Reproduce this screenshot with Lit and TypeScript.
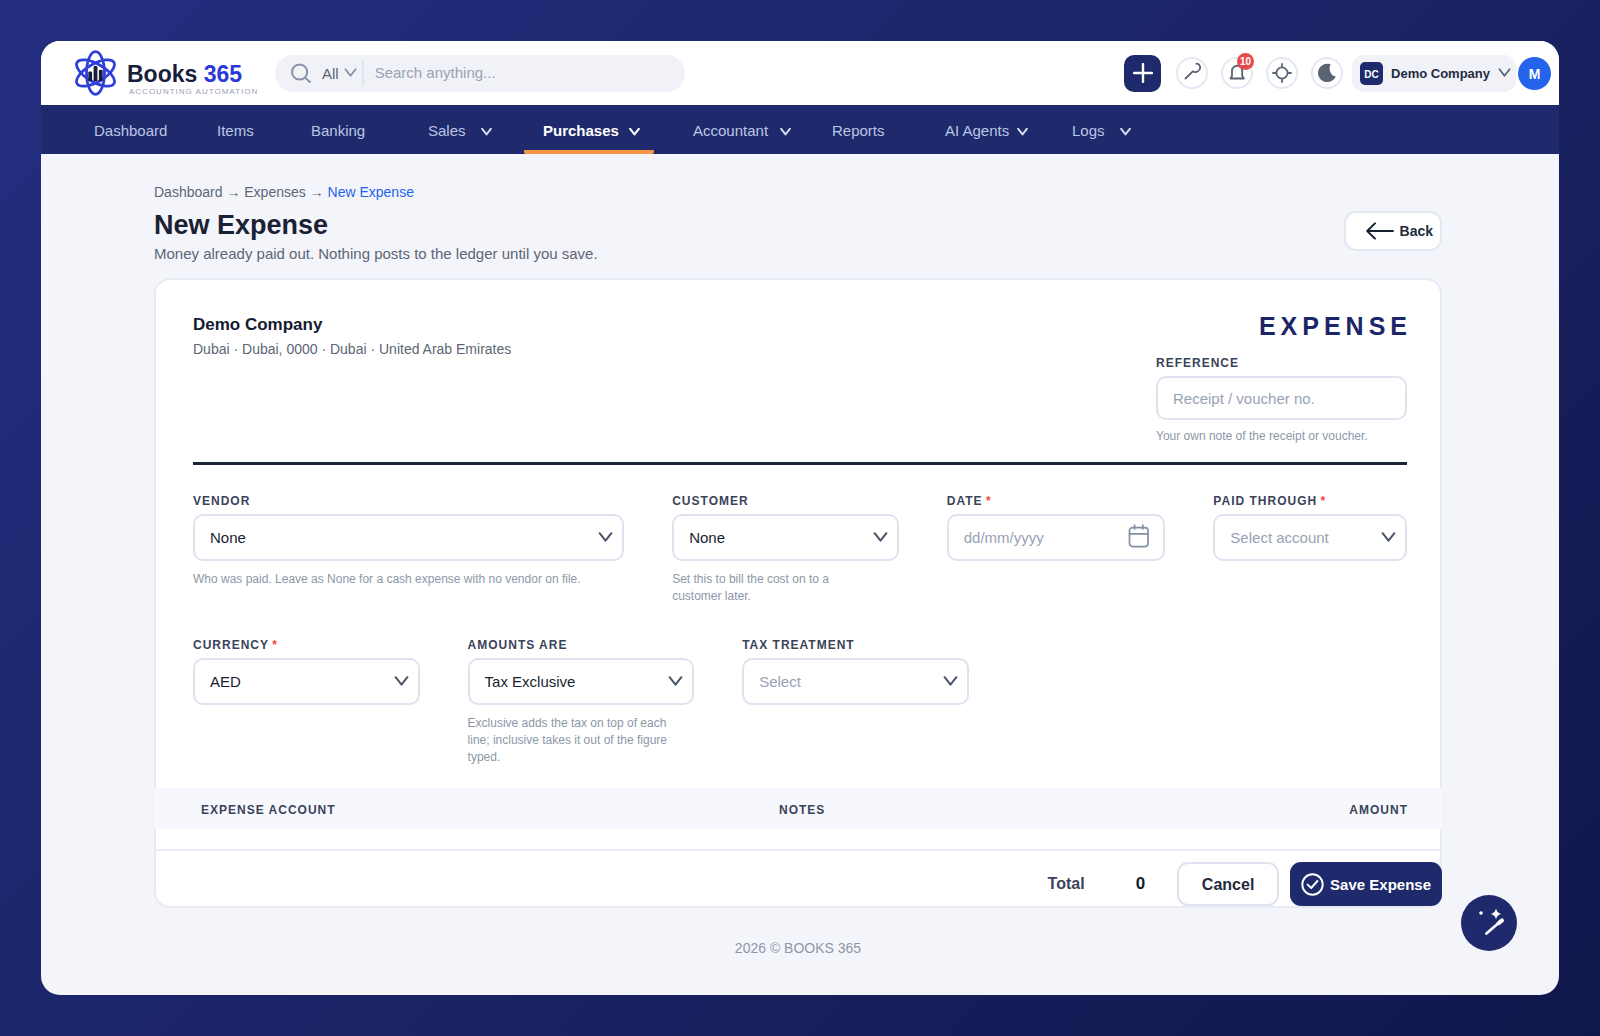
import { LitElement, html, css, nothing } from "lit";
import { customElement, property } from "lit/decorators.js";
import { classMap } from "lit/directives/class-map.js";

const FONT = css`"Liberation Sans", Arial, Helvetica, sans-serif`;

const chevron = (size: "nav" | "small" | "field") => html`
  <svg class="chevron ${size}" viewBox="0 0 14 10" aria-hidden="true">
    <path d="M1.5 1 L7 8 L12.5 1" fill="none" stroke="currentColor"
      stroke-width=${size === "nav" ? 2.6 : 1.9} stroke-linecap="round" stroke-linejoin="round" />
  </svg>`;

const chevronStyles = css`
  .chevron { display: block; flex: none; }
  .chevron.nav { width: 11px; height: 8px; }
  .chevron.small { width: 13px; height: 10px; }
  .chevron.field { width: 15px; height: 11px; }
`;

interface NavItem {
  label: string;
  menu?: boolean;
  active?: boolean;
  spread?: "tight" | "wide";
}

const NAV: NavItem[] = [
  { label: "Dashboard" },
  { label: "Items" },
  { label: "Banking" },
  { label: "Sales", menu: true, spread: "wide" },
  { label: "Purchases", menu: true, active: true },
  { label: "Accountant", menu: true },
  { label: "Reports" },
  { label: "AI Agents", menu: true, spread: "tight" },
  { label: "Logs", menu: true, spread: "wide" },
];

@customElement("app-header")
export class AppHeader extends LitElement {
  static styles = [
    chevronStyles,
    css`
      :host { display: block; font-family: ${FONT}; }
      button { font: inherit; border: 0; padding: 0; cursor: pointer; }
      .bar {
        display: flex; align-items: center; height: 64px; box-sizing: border-box;
        padding: 0 8px 0 33px; background: #fff;
      }
      .brand { display: flex; align-items: center; gap: 10px; width: 201px; flex: none; text-decoration: none; }
      .mark { width: 43px; height: 48px; flex: none; }
      .name { display: block; font-size: 23px; line-height: 24px; font-weight: 700; color: #161e3c; padding-top: 13px; }
      .name em { font-style: normal; color: #2b3ad6; }
      .tagline { display: block; padding-left: 2px; font-size: 8px; line-height: 10px; letter-spacing: 1px; color: #98a1b3; white-space: nowrap; margin-top: 1px; }
      .search {
        display: flex; align-items: center; flex: 0 1 410px; height: 37px; box-sizing: border-box;
        padding-left: 16px; border-radius: 19px; background: #f1f2f8; color: #8490a5;
      }
      .search svg.glass { width: 20px; height: 20px; flex: none; }
      .scope { display: flex; align-items: center; gap: 5px; margin-left: 11px; font-size: 15px; color: #5a6474; background: none; }
      .scope .chevron { color: #8490a5; }
      .rule { width: 2px; height: 26px; margin: 0 11px 0 5px; background: #dfe4ee; }
      .search input {
        flex: 1; min-width: 0; border: 0; padding: 0; outline: 0; background: none;
        font: 15px/20px ${FONT}; color: #161e2e;
      }
      .search input::placeholder { color: #98a2b3; opacity: 1; }
      .tools { display: flex; align-items: center; margin-left: auto; }
      .add { display: grid; place-items: center; width: 37px; height: 37px; border-radius: 10px; background: #1e2a6b; color: #fff; margin-right: 15px; }
      .rounds { display: flex; gap: 13px; margin-right: 9px; }
      .round {
        position: relative; display: grid; place-items: center; width: 32px; height: 32px; box-sizing: border-box;
        border: 2px solid #e4e8f2; border-radius: 50%; background: #fff; color: #5a6474;
      }
      .round svg { width: 24px; height: 24px; }
      .badge {
        position: absolute; top: -6px; right: -3px; width: 17px; height: 17px; border-radius: 50%;
        background: #e5484d; color: #fff; font-size: 10px; line-height: 18px; font-weight: 700; text-align: center;
      }
      .company {
        display: flex; align-items: center; height: 37px; padding: 0 5px 0 8px; margin-right: 2px; border-radius: 12px;
        background: #f1f2f8; color: #232b3f; font-size: 13px; font-weight: 700; white-space: nowrap;
      }
      .company .chevron { margin-left: 8px; color: #5a6474; }
      .initials {
        width: 23px; height: 23px; margin-right: 8px; border-radius: 5px; background: #1e2a6b; color: #fff;
        font-size: 10px; line-height: 25px; text-align: center;
      }
      .avatar { width: 33px; height: 33px; border-radius: 50%; background: #2563eb; color: #fff; font-weight: 700; font-size: 14px; line-height: 35px; }
      nav {
        display: grid; grid-template-columns: 123px 94px 117px 115px 150px 139px 113px 127px auto;
        justify-content: start; height: 49px; padding-left: 34px; background: #1e2a6b;
      }
      .item {
        display: flex; align-items: center; justify-self: start; gap: 12px; padding: 2px 14px 0 19px;
        color: #bcc5e6; font-size: 15px; text-decoration: none; white-space: nowrap; box-sizing: border-box;
      }
      .item.wide { gap: 15px; }
      .item.tight { gap: 8px; }
      .item .chevron { color: #d3d9f0; margin-top: 3px; }
      .item.active { gap: 10px; padding-top: 6px; border-bottom: 4px solid #f79646; border-radius: 2px; color: #fff; font-weight: 700; }
      .item.active .chevron { color: #fff; }
    `,
  ];

  render() {
    return html`
      <header class="bar">
        <a class="brand" href="#home" aria-label="Books 365">
          <svg class="mark" viewBox="-21.5 -24 43 48" aria-hidden="true">
            <g fill="none" stroke="#2f40da" stroke-width="2.8">
              <ellipse rx="9" ry="21.3" />
              <ellipse rx="9" ry="21.3" transform="rotate(60)" />
              <ellipse rx="9" ry="21.3" transform="rotate(-60)" />
            </g>
            <g fill="#161e3c">
              <rect x="-7.2" y="-1.5" width="3.8" height="9.7" rx="1.2" />
              <rect x="-1.9" y="-7" width="3.8" height="15.2" rx="1.2" />
              <rect x="3.4" y="-3.2" width="3.8" height="11.4" rx="1.2" />
            </g>
          </svg>
          <span>
            <span class="name">Books <em>365</em></span>
            <span class="tagline">ACCOUNTING AUTOMATION</span>
          </span>
        </a>
        <div class="search" role="search">
          <svg class="glass" viewBox="0 0 20 20" fill="none" stroke="currentColor" stroke-width="2" stroke-linecap="round" aria-hidden="true">
            <circle cx="8.6" cy="9" r="7.6" /><path d="M14.2 14.6 L18.8 19" />
          </svg>
          <button class="scope" type="button">All ${chevron("small")}</button>
          <span class="rule"></span>
          <input type="search" aria-label="Search" placeholder="Search anything..." />
        </div>
        <div class="tools">
          <button class="add" type="button" aria-label="Create">
            <svg width="20" height="20" viewBox="0 0 20 20" aria-hidden="true">
              <path d="M10 1 V19 M1 10 H19" stroke="currentColor" stroke-width="2.4" stroke-linecap="round" />
            </svg>
          </button>
          <div class="rounds">
            <button class="round" type="button" aria-label="Tools">
              <svg viewBox="0 0 24 24" fill="none" stroke="currentColor" stroke-width="1.8" stroke-linecap="round" stroke-linejoin="round">
                <path d="M5.5 17.5 L12.8 10.4 C16 12.2 20 10.2 20.2 6.8 C20.3 4.5 18.7 2.6 16.4 2.7" />
              </svg>
            </button>
            <button class="round" type="button" aria-label="Notifications">
              <svg viewBox="0 0 24 24" fill="none" stroke="currentColor" stroke-width="1.8" stroke-linecap="round" stroke-linejoin="round">
                <path d="M5.5 17.5 H18.8 L17.2 15 V10 C17.2 3 7 3 7 10 V15 Z" />
              </svg>
              <span class="badge">10</span>
            </button>
            <button class="round" type="button" aria-label="Locate">
              <svg viewBox="0 0 24 24" fill="none" stroke="currentColor" stroke-width="1.8" stroke-linecap="round">
                <circle cx="12" cy="12" r="5.6" />
                <path d="M12 3 V6 M12 18 V21 M3 12 H6 M18 12 H21" />
              </svg>
            </button>
            <button class="round" type="button" aria-label="Dark mode">
              <svg viewBox="0 0 24 24">
                <path fill="currentColor" d="M15.6 3.2 C13.4 7.2 14.8 14.2 20.8 15.6 C18.6 20.6 13 22.4 8.4 20.2 C3.4 17.8 1.6 11.8 4.2 7.4 C6.4 3.4 11.2 1.8 15.6 3.2 Z" />
              </svg>
            </button>
          </div>
          <button class="company" type="button">
            <span class="initials">DC</span>Demo Company${chevron("small")}
          </button>
          <button class="avatar" type="button" aria-label="Account">M</button>
        </div>
      </header>
      <nav aria-label="Main">
        ${NAV.map(
          (n) => html`<a
            href="#${n.label.toLowerCase().replace(" ", "-")}"
            aria-current=${n.active ? "page" : nothing}
            class=${classMap({ item: true, active: !!n.active, wide: n.spread === "wide", tight: n.spread === "tight" })}
            >${n.label}${n.menu ? chevron("nav") : nothing}</a>`,
        )}
      </nav>
    `;
  }
}

@customElement("form-field")
export class FormField extends LitElement {
  @property() label = "";
  @property() kind: "text" | "select" | "date" = "text";
  @property() value = "";
  @property() placeholder = "";
  @property() hint = "";
  @property({ type: Boolean }) required = false;

  static styles = [
    chevronStyles,
    css`
      :host { display: block; min-width: 0; font-family: ${FONT}; }
      label { display: block; font-size: 12px; line-height: 14px; font-weight: 700; letter-spacing: 1px; color: #3a435a; }
      .star { color: #ef4444; margin-left: -1px; }
      .box { display: grid; align-items: center; margin-top: 6px; }
      .box > * { grid-area: 1 / 1; }
      input, select {
        width: 100%; height: 47px; box-sizing: border-box; margin: 0; padding: 0 40px 0 15px; appearance: none;
        border: 2px solid #dfe3ef; border-radius: 10px; background: #fff; outline: 0;
        font: 15px/20px ${FONT}; color: #171f32;
      }
      .text input { height: 44px; padding-right: 15px; }
      select.empty, input::placeholder { color: #98a2b3; opacity: 1; }
      .chevron { justify-self: end; margin-right: 11px; color: #4a5568; pointer-events: none; }
      .pick { justify-self: end; margin: 0 15px 4px 0; padding: 0; border: 0; background: none; color: #8490a5; }
      .pick svg { display: block; width: 22px; height: 24px; }
      .hint { margin: 10px 0 0; padding-right: 20px; font-size: 12px; line-height: 17px; color: #8d97a8; }
      .text + .hint { margin-top: 8px; }
    `,
  ];

  private control() {
    const describedBy = this.hint ? "hint" : nothing;
    if (this.kind === "select") {
      const shown = this.value || this.placeholder;
      return html`
        <select id="control" class=${this.value ? "" : "empty"} ?required=${this.required} aria-describedby=${describedBy}>
          <option>${shown}</option>
        </select>
        ${chevron("field")}`;
    }
    return html`
      <input id="control" type="text" placeholder=${this.placeholder} ?required=${this.required} aria-describedby=${describedBy} />
      ${this.kind === "date"
        ? html`<button class="pick" type="button" aria-label="Pick a date">
            <svg viewBox="0 0 22 24" fill="none" stroke="currentColor" stroke-width="1.7" stroke-linecap="round">
              <rect x="1.5" y="3.6" width="18.5" height="19" rx="3" />
              <path d="M1.5 9.8 H20 M6.6 1.2 V5 M14.8 1.2 V5" />
            </svg>
          </button>`
        : nothing}`;
  }

  render() {
    return html`
      <label for="control">${this.label}${this.required ? html` <span class="star">*</span>` : nothing}</label>
      <div class="box ${this.kind}">${this.control()}</div>
      ${this.hint ? html`<p id="hint" class="hint">${this.hint}</p>` : nothing}
    `;
  }
}

@customElement("expense-card")
export class ExpenseCard extends LitElement {
  static styles = css`
    :host { display: block; font-family: ${FONT}; }
    .card { border: 2px solid #e8eaf4; border-radius: 16px; background: #fff; }
    .top { display: flex; justify-content: space-between; margin: 0 33px 0 37px; padding: 32px 0 17px; border-bottom: 3px solid #1c2536; }
    h2 { margin: 0; padding-top: 2px; font-size: 17px; line-height: 22px; color: #131b2e; }
    .address { margin: 4px 0 0; font-size: 14px; line-height: 18px; color: #5d6675; }
    .reference { width: 251px; }
    .kind { margin: -1px -5px 15px 0; font-size: 25px; line-height: 30px; font-weight: 700; letter-spacing: 5px; color: #1b2568; text-align: right; }
    .fields { display: grid; column-gap: 48px; margin: 0 33px 0 37px; }
    .first { grid-template-columns: 432fr 227fr 219fr 194fr; padding-top: 29px; }
    .second { grid-template-columns: 227fr 227fr 227fr 391fr; padding: 33px 0 22px; }
    table { width: calc(100% + 4px); margin: 0 -2px; border-collapse: collapse; table-layout: fixed; background: #f7f8fd; }
    th { height: 41px; padding: 3px 0 0; box-sizing: border-box; font-size: 12px; line-height: 14px; letter-spacing: 1px; color: #3a435a; text-align: left; }
    .c-account { width: 625px; padding-left: 47px; }
    .c-amount { padding-right: 34px; text-align: right; }
    .total-bar {
      display: flex; align-items: center; justify-content: flex-end; margin: 20px -2px 0 0; padding: 11px 0 0;
      border-top: 2px solid #e8ecf5; font-weight: 700;
    }
    .total-bar .name { margin-right: 51px; font-size: 16px; color: #3a435a; }
    .total-bar output { margin-right: 32px; font-size: 17px; color: #131b2e; }
    button { height: 44px; box-sizing: border-box; border-radius: 11px; font: 700 15px/20px ${FONT}; cursor: pointer; }
    .cancel { width: 102px; margin-right: 11px; padding: 2px 0 0; border: 2px solid #dfe3ef; background: #fff; color: #232b3f; font-size: 16px; }
    .save { display: flex; align-items: center; gap: 6px; padding: 0 11px; border: 0; background: #1e2a6b; color: #fff; }
    .save svg { width: 23px; height: 23px; }
    .save span { padding-top: 2px; }
  `;

  render() {
    return html`
      <form class="card" @submit=${(e: Event) => e.preventDefault()}>
        <div class="top">
          <div>
            <h2>Demo Company</h2>
            <p class="address">Dubai · Dubai, 0000 · Dubai · United Arab Emirates</p>
          </div>
          <div class="reference">
            <p class="kind">EXPENSE</p>
            <form-field label="REFERENCE" placeholder="Receipt / voucher no." hint="Your own note of the receipt or voucher."></form-field>
          </div>
        </div>
        <div class="fields first">
          <form-field kind="select" label="VENDOR" value="None" hint="Who was paid. Leave as None for a cash expense with no vendor on file."></form-field>
          <form-field kind="select" label="CUSTOMER" value="None" hint="Set this to bill the cost on to a customer later."></form-field>
          <form-field kind="date" label="DATE" placeholder="dd/mm/yyyy" required></form-field>
          <form-field kind="select" label="PAID THROUGH" placeholder="Select account" required></form-field>
        </div>
        <div class="fields second">
          <form-field kind="select" label="CURRENCY" value="AED" required></form-field>
          <form-field kind="select" label="AMOUNTS ARE" value="Tax Exclusive" hint="Exclusive adds the tax on top of each line; inclusive takes it out of the figure typed."></form-field>
          <form-field kind="select" label="TAX TREATMENT" placeholder="Select"></form-field>
        </div>
        <table>
          <thead>
            <tr>
              <th class="c-account" scope="col">EXPENSE ACCOUNT</th>
              <th scope="col">NOTES</th>
              <th class="c-amount" scope="col">AMOUNT</th>
            </tr>
          </thead>
        </table>
        <div class="total-bar">
          <span class="name">Total</span>
          <output>0</output>
          <button class="cancel" type="button">Cancel</button>
          <button class="save" type="submit">
            <svg viewBox="0 0 23 23" fill="none" stroke="currentColor" stroke-width="1.9" stroke-linecap="round" stroke-linejoin="round" aria-hidden="true">
              <circle cx="11.5" cy="11.5" r="10.2" /><path d="M6.6 11.6 L10.2 15 L16.4 8" />
            </svg>
            <span>Save Expense</span>
          </button>
        </div>
      </form>
    `;
  }
}

@customElement("app-root")
export class AppRoot extends LitElement {
  static styles = css`
    :host {
      display: flex; min-height: 100vh; box-sizing: border-box; padding: 41px;
      background: linear-gradient(135deg, #232e80 0%, #1b2466 50%, #10174c 100%);
      font-family: ${FONT};
    }
    .window { position: relative; flex: 1; min-width: 0; border-radius: 19px; overflow: hidden; background: #f4f5fb; }
    main { padding: 29px 117px 0 113px; }
    .crumbs { font-size: 14px; line-height: 18px; color: #5d6675; }
    .crumbs a { color: inherit; text-decoration: none; }
    .crumbs a[aria-current] { color: #2563eb; }
    .heading { display: flex; align-items: center; justify-content: space-between; margin: 7px 0 14px; }
    h1 { margin: 0; font-size: 27px; line-height: 34px; color: #1a2133; }
    .sub { margin: 2px 0 0; font-size: 15px; line-height: 20px; color: #5d6675; }
    .back {
      display: flex; align-items: center; gap: 6px; height: 40px; box-sizing: border-box; margin-bottom: 10px; padding: 0 7px 0 20px;
      border: 2px solid #e4e8f2; border-radius: 12px; background: #fff; color: #232b3f; font: 700 14px/20px ${FONT}; cursor: pointer;
    }
    .back svg { width: 28px; height: 18px; color: #171f32; }
    footer { padding-top: 31px; font-size: 14px; line-height: 18px; color: #8d97a8; text-align: center; }
    .assist {
      position: absolute; right: 42px; bottom: 44px; display: grid; place-items: center; width: 56px; height: 56px;
      padding: 0; border: 0; border-radius: 50%; background: #1e2a6b; color: #fff; cursor: pointer;
    }
    .assist svg { width: 56px; height: 56px; }
  `;

  render() {
    return html`
      <div class="window">
        <app-header></app-header>
        <main>
          <nav class="crumbs" aria-label="Breadcrumb">
            <a href="#dashboard">Dashboard</a> → <a href="#expenses">Expenses</a> → <a href="#new-expense" aria-current="page">New Expense</a>
          </nav>
          <div class="heading">
            <div>
              <h1>New Expense</h1>
              <p class="sub">Money already paid out. Nothing posts to the ledger until you save.</p>
            </div>
            <button class="back" type="button">
              <svg viewBox="0 0 28 18" fill="none" stroke="currentColor" stroke-width="2" stroke-linecap="round" stroke-linejoin="round" aria-hidden="true">
                <path d="M27 9 H1.2 M9 1.4 L1.2 9 L9 16.6" />
              </svg>
              Back
            </button>
          </div>
          <expense-card></expense-card>
          <footer>2026 © BOOKS 365</footer>
        </main>
        <button class="assist" type="button" aria-label="Assistant">
          <svg viewBox="0 0 56 56" aria-hidden="true">
            <circle cx="20" cy="18" r="1.8" fill="currentColor" />
            <path d="M35 13.6 Q35.9 18.1 40.2 19 Q35.9 19.9 35 24.4 Q34.1 19.9 29.8 19 Q34.1 18.1 35 13.6 Z" fill="currentColor" />
            <path d="M25.4 38.6 L37.6 28" stroke="currentColor" stroke-width="2.6" stroke-linecap="round" />
            <path d="M37.6 28.2 L41 25.4" stroke="currentColor" stroke-width="4" stroke-linecap="round" />
          </svg>
        </button>
      </div>
    `;
  }
}
